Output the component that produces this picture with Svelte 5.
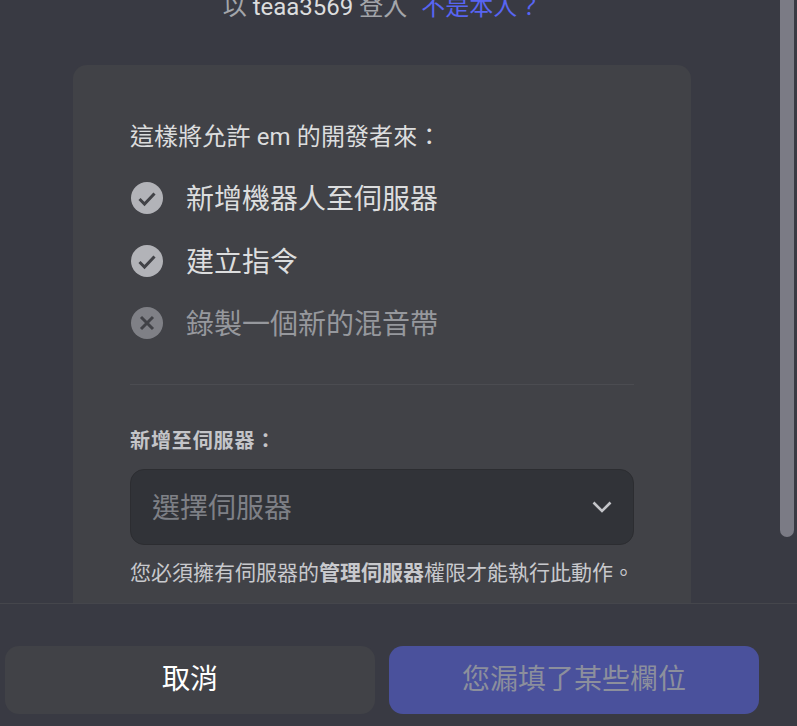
<script lang="ts">
	const scopes = [
		{ label: '新增機器人至伺服器', granted: true },
		{ label: '建立指令', granted: true },
		{ label: '錄製一個新的混音帶', granted: false }
	];
</script>

<div class="page">
	<div class="scroller">
		<div class="content">
			<p class="login">
				以 <span class="name">teaa3569</span> 登入<a href="#top" class="switch">不是本人？</a>
			</p>
			<section class="card">
				<h2>這樣將允許 em 的開發者來：</h2>
				<ul class="scopes">
					{#each scopes as scope (scope.label)}
						<li class:denied={!scope.granted}>
							<svg class="status" viewBox="0 0 32 32" width="32" height="32" aria-hidden="true">
								<circle cx="16" cy="16" r="16" class="disc" />
								{#if scope.granted}
									<path d="M8.5 17l5 5 10-10.5" class="mark" />
								{:else}
									<path d="M10 10l12 12M22 10L10 22" class="mark" />
								{/if}
							</svg>
							<span>{scope.label}</span>
						</li>
					{/each}
				</ul>
				<hr />
				<h3>新增至伺服器：</h3>
				<div class="select">
					<span>選擇伺服器</span>
					<svg viewBox="0 0 20 12" width="20" height="12" aria-hidden="true">
						<path d="M1.5 1.5L10 10l8.5-8.5" />
					</svg>
				</div>
				<p class="hint">您必須擁有伺服器的<strong>管理伺服器</strong>權限才能執行此動作。</p>
			</section>
		</div>
		<div class="scrollbar"><div class="thumb"></div></div>
	</div>
	<footer>
		<button class="cancel">取消</button>
		<button class="submit" disabled>您漏填了某些欄位</button>
	</footer>
</div>

<style>
	:global(body) {
		margin: 0;
		background: #393a43;
		font-family: Roboto, "Noto Sans CJK TC", sans-serif;
	}

	.page {
		height: 726px;
		display: flex;
		flex-direction: column;
		overflow: hidden;
	}

	.scroller {
		flex: 1;
		min-height: 0;
		display: flex;
		overflow: hidden;
	}

	.content {
		width: 618px;
		margin-left: 73px;
		display: flex;
		flex-direction: column;
		margin-top: -11px;
	}

	.login {
		margin: 0;
		height: 76px;
		line-height: 37px;
		font-size: 24px;
		color: #a3a5aa;
		text-align: center;
		white-space: nowrap;
	}

	.name {
		color: #dcddde;
	}

	.switch {
		margin-left: 14px;
		color: #5865f2;
		text-decoration: none;
	}

	.card {
		flex: 1;
		background: #414247;
		border-radius: 14px 14px 0 0;
		padding: 52px 57px 0;
		color: #dcddde;
	}

	h2 {
		margin: 0 0 10px;
		font-size: 24px;
		line-height: 40px;
		font-weight: 400;
		letter-spacing: 0.12px;
	}

	.scopes {
		list-style: none;
		margin: 0;
		padding: 0;
		display: flex;
		flex-direction: column;
	}

	.scopes li {
		height: 62.5px;
		display: flex;
		align-items: center;
		gap: 23px;
		font-size: 28px;
		color: #dcddde;
	}

	.scopes li span {
		padding-bottom: 2px;
	}

	.scopes li.denied {
		color: #96989d;
	}

	.status {
		margin-left: 1px;
		flex: none;
	}

	.disc {
		fill: #b2b3b8;
	}

	.denied .disc {
		fill: #7f8086;
	}

	.mark {
		fill: none;
		stroke: #414247;
		stroke-width: 3;
	}

	hr {
		border: 0;
		border-top: 1px solid #4b4c51;
		margin: 29px 0 43px;
	}

	h3 {
		margin: 0 0 15px;
		font-size: 20px;
		line-height: 26px;
		font-weight: 700;
		letter-spacing: 0.9px;
		color: #c4c5c9;
	}

	.select {
		height: 76px;
		box-sizing: border-box;
		background: #313338;
		border: 1px solid #2c2d31;
		border-radius: 14px;
		padding: 0 21px;
		display: flex;
		align-items: center;
		justify-content: space-between;
		font-size: 28px;
		color: #7e8086;
	}

	.select span {
		padding-bottom: 2px;
	}

	.select svg {
		fill: none;
		stroke: #c4c5c9;
		stroke-width: 2.6;
	}

	.hint {
		margin: 12px 0 0;
		font-size: 21px;
		line-height: 32px;
		white-space: nowrap;
		color: #c8c9cd;
	}

	.hint strong {
		font-weight: 700;
	}

	.scrollbar {
		margin-left: 89px;
		width: 14px;
	}

	.thumb {
		height: 537px;
		background: #7b7b85;
		border-radius: 0 0 7px 7px;
	}

	footer {
		flex: none;
		height: 123px;
		box-sizing: border-box;
		border-top: 1px solid #45464c;
		padding: 42px 38px 12px 5px;
		display: flex;
		gap: 14px;
	}

	button {
		flex: 1;
		height: 68px;
		border: 0;
		border-radius: 14px;
		padding: 0 0 6px;
		font: inherit;
		font-size: 28px;
	}

	.cancel {
		background: #414247;
		color: #fff;
	}

	.submit {
		background: #4a519c;
		color: #8c8f9c;
	}
</style>
